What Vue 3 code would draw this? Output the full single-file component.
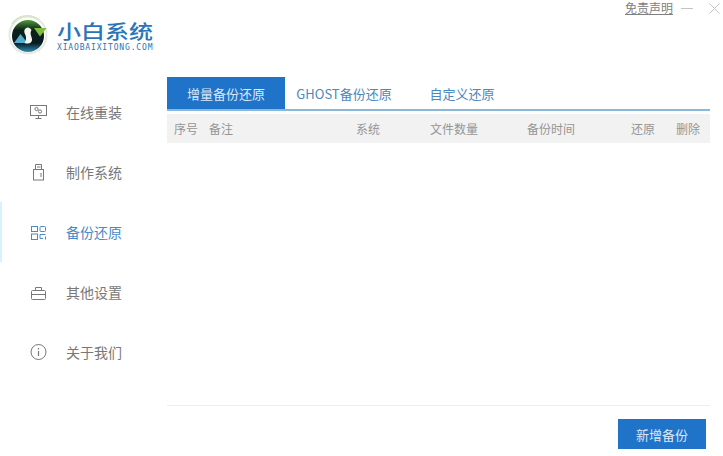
<script setup>
const nav = [
  { key: 'monitor', label: '在线重装' },
  { key: 'usb', label: '制作系统' },
  { key: 'grid', label: '备份还原', active: true },
  { key: 'case', label: '其他设置' },
  { key: 'info', label: '关于我们' },
]
const tabs = [
  { label: '增量备份还原', active: true },
  { label: 'GHOST备份还原' },
  { label: '自定义还原' },
]
const cols = [
  { label: '序号', w: 35 },
  { label: '备注', w: 147 },
  { label: '系统', w: 74 },
  { label: '文件数量', w: 97 },
  { label: '备份时间', w: 104 },
  { label: '还原', w: 45 },
  { label: '删除', w: 35 },
]
</script>

<template>
  <div class="app">
    <header class="top">
      <div class="brand">
        <svg class="logo" width="40" height="42" viewBox="0 0 40 42">
          <defs>
            <linearGradient id="disc" x1="0" y1="0" x2="0" y2="1">
              <stop offset="0" stop-color="#4f9a3a" />
              <stop offset="0.32" stop-color="#0b1f18" />
              <stop offset="0.72" stop-color="#0a1a1f" />
              <stop offset="1" stop-color="#2f8fb4" />
            </linearGradient>
          </defs>
          <circle cx="20" cy="20" r="18.5" fill="none" stroke="#e4eae2" stroke-width="2" />
          <path d="M4 9A18.5 18.5 0 0 1 30 4.5" fill="none" stroke="#d7e6c8" stroke-width="2" />
          <circle cx="20" cy="21" r="16" fill="url(#disc)" />
          <path d="M26 13H38.5L32 21.5Z" fill="#7fbb3c" />
          <path d="M6 28H19.5L12.5 19Z" fill="#52aed0" />
          <path d="M20 12.5C16.5 13 15.5 16 17 19C18.5 22 18.5 25 16.5 28C20 29.5 24.5 28 24 24C23.5 21 21.5 18.5 23.5 15C22.5 13.5 21 12.5 20 12.5Z" fill="#f5f7f3" />
        </svg>
        <div class="brand-text">
          <div class="brand-name">小白系统</div>
          <div class="brand-url">XIAOBAIXITONG.COM</div>
        </div>
      </div>
      <div class="win">
        <span class="disclaimer">免责声明</span>
        <svg width="12" height="12" viewBox="0 0 12 12" class="min"><path d="M0 6.5H12" stroke="#c4c4c4" /></svg>
        <svg width="11" height="11" viewBox="0 0 11 11"><path d="M0.5 0.5L10.5 10.5M10.5 0.5L0.5 10.5" stroke="#c4c4c4" fill="none" /></svg>
      </div>
    </header>
    <div class="body">
      <nav class="side">
        <div v-for="n in nav" :key="n.key" class="item" :class="{ on: n.active }">
          <svg class="ico" width="20" height="20" viewBox="0 0 20 20" fill="none" stroke="currentColor" stroke-width="1">
            <template v-if="n.key === 'monitor'">
              <rect x="2.5" y="3.5" width="16" height="10" />
              <circle cx="8.5" cy="7" r="1.6" />
              <circle cx="12" cy="9.5" r="1.6" />
              <path d="M10.5 13.5V16.5M7.5 16.5H13.5" />
            </template>
            <template v-else-if="n.key === 'usb'">
              <rect x="5.5" y="7.5" width="10" height="10.5" />
              <path d="M7.5 7.5V2.5H13.5V7.5M9 5H12.5M13 11V15" />
            </template>
            <template v-else-if="n.key === 'grid'">
              <rect x="3.5" y="4.5" width="6" height="5" />
              <rect x="3.5" y="12" width="6" height="5.5" />
              <rect x="12" y="4.5" width="5.5" height="5" rx="1" />
              <path d="M12 12.5V16.5H15M12 12.5H17.5M17.5 14.5V17.5" />
            </template>
            <template v-else-if="n.key === 'case'">
              <rect x="3.5" y="8.5" width="14" height="9" rx="1" />
              <path d="M7.5 8.5V5.5H13.5V8.5M3.5 12.5H17.5" />
            </template>
            <template v-else>
              <circle cx="10.5" cy="10" r="7.5" />
              <path d="M10.5 9V14M10.5 6V7.5" stroke-width="1.2" />
            </template>
          </svg>
          <span>{{ n.label }}</span>
        </div>
      </nav>
      <main class="main">
        <div class="tabs">
          <div v-for="t in tabs" :key="t.label" class="tab" :class="{ on: t.active }">{{ t.label }}</div>
        </div>
        <div class="thead">
          <span v-for="c in cols" :key="c.label" :style="{ width: c.w + 'px' }">{{ c.label }}</span>
        </div>
        <div class="spacer"></div>
        <div class="foot">
          <button class="add">新增备份</button>
        </div>
      </main>
    </div>
  </div>
</template>

<style>
html, body { margin: 0; background: #fff; }
</style>

<style scoped>
.app {
  width: 723px;
  height: 456px;
  background: #fff;
  overflow: hidden;
  font-family: "Noto Sans CJK SC", "Liberation Sans", sans-serif;
  display: flex;
  flex-direction: column;
}
.top {
  height: 77px;
  display: flex;
  justify-content: space-between;
  align-items: flex-start;
  flex: none;
}
.brand {
  display: flex;
  align-items: flex-start;
  padding: 15px 0 0 8px;
  gap: 9px;
}
.brand-name {
  font-size: 19px;
  line-height: 19px;
  color: #2a74b8;
  font-weight: 500;
  margin-top: 6px;
  transform: scaleX(1.263);
  transform-origin: left center;
}
.brand-url {
  font-family: "DejaVu Sans Mono", monospace;
  font-size: 8px;
  line-height: 8px;
  letter-spacing: 0.85px;
  color: #2a74b8;
  margin-top: 4px;
}
.win {
  display: flex;
  align-items: center;
  padding-right: 3px;
  height: 16px;
}
.disclaimer {
  font-size: 12px;
  line-height: 14px;
  color: #808080;
  text-decoration: underline;
  margin-right: 8px;
}
.min { margin-right: 16px; }
.body { display: flex; flex: 1; min-height: 0; }
.side {
  width: 167px;
  flex: none;
  padding-top: 5px;
}
.item {
  height: 60px;
  display: flex;
  align-items: center;
  padding-left: 28px;
  gap: 18px;
  color: #787878;
  font-size: 14px;
  box-sizing: border-box;
}
.item.on {
  color: #4a8ac6;
  border-left: 2px solid #d4f3fb;
  padding-left: 26px;
}
.ico { flex: none; }
.main {
  width: 543px;
  flex: none;
  display: flex;
  flex-direction: column;
}
.tabs {
  display: flex;
  height: 32px;
  border-bottom: 2px solid #8ab8d8;
  flex: none;
}
.tab {
  width: 118px;
  font-size: 13px;
  line-height: 34px;
  color: #4b88bd;
  text-align: center;
}
.tab.on { background: #1f73c9; color: #dbe8f6; }
.thead {
  margin-top: 3px;
  height: 29px;
  background: #f2f2f2;
  display: flex;
  align-items: center;
  font-size: 12px;
  color: #959595;
  padding-left: 7px;
  flex: none;
}
.thead span { flex: none; }
.spacer { flex: 1; }
.foot {
  height: 51px;
  box-sizing: border-box;
  border-top: 1px solid #eee;
  display: flex;
  justify-content: flex-end;
  padding: 13px 4px 0 0;
  flex: none;
}
.add {
  width: 88px;
  height: 30px;
  border: 0;
  padding: 0;
  background: #1f73c9;
  color: #dbe8f6;
  font: inherit;
  font-size: 13px;
}
</style>
